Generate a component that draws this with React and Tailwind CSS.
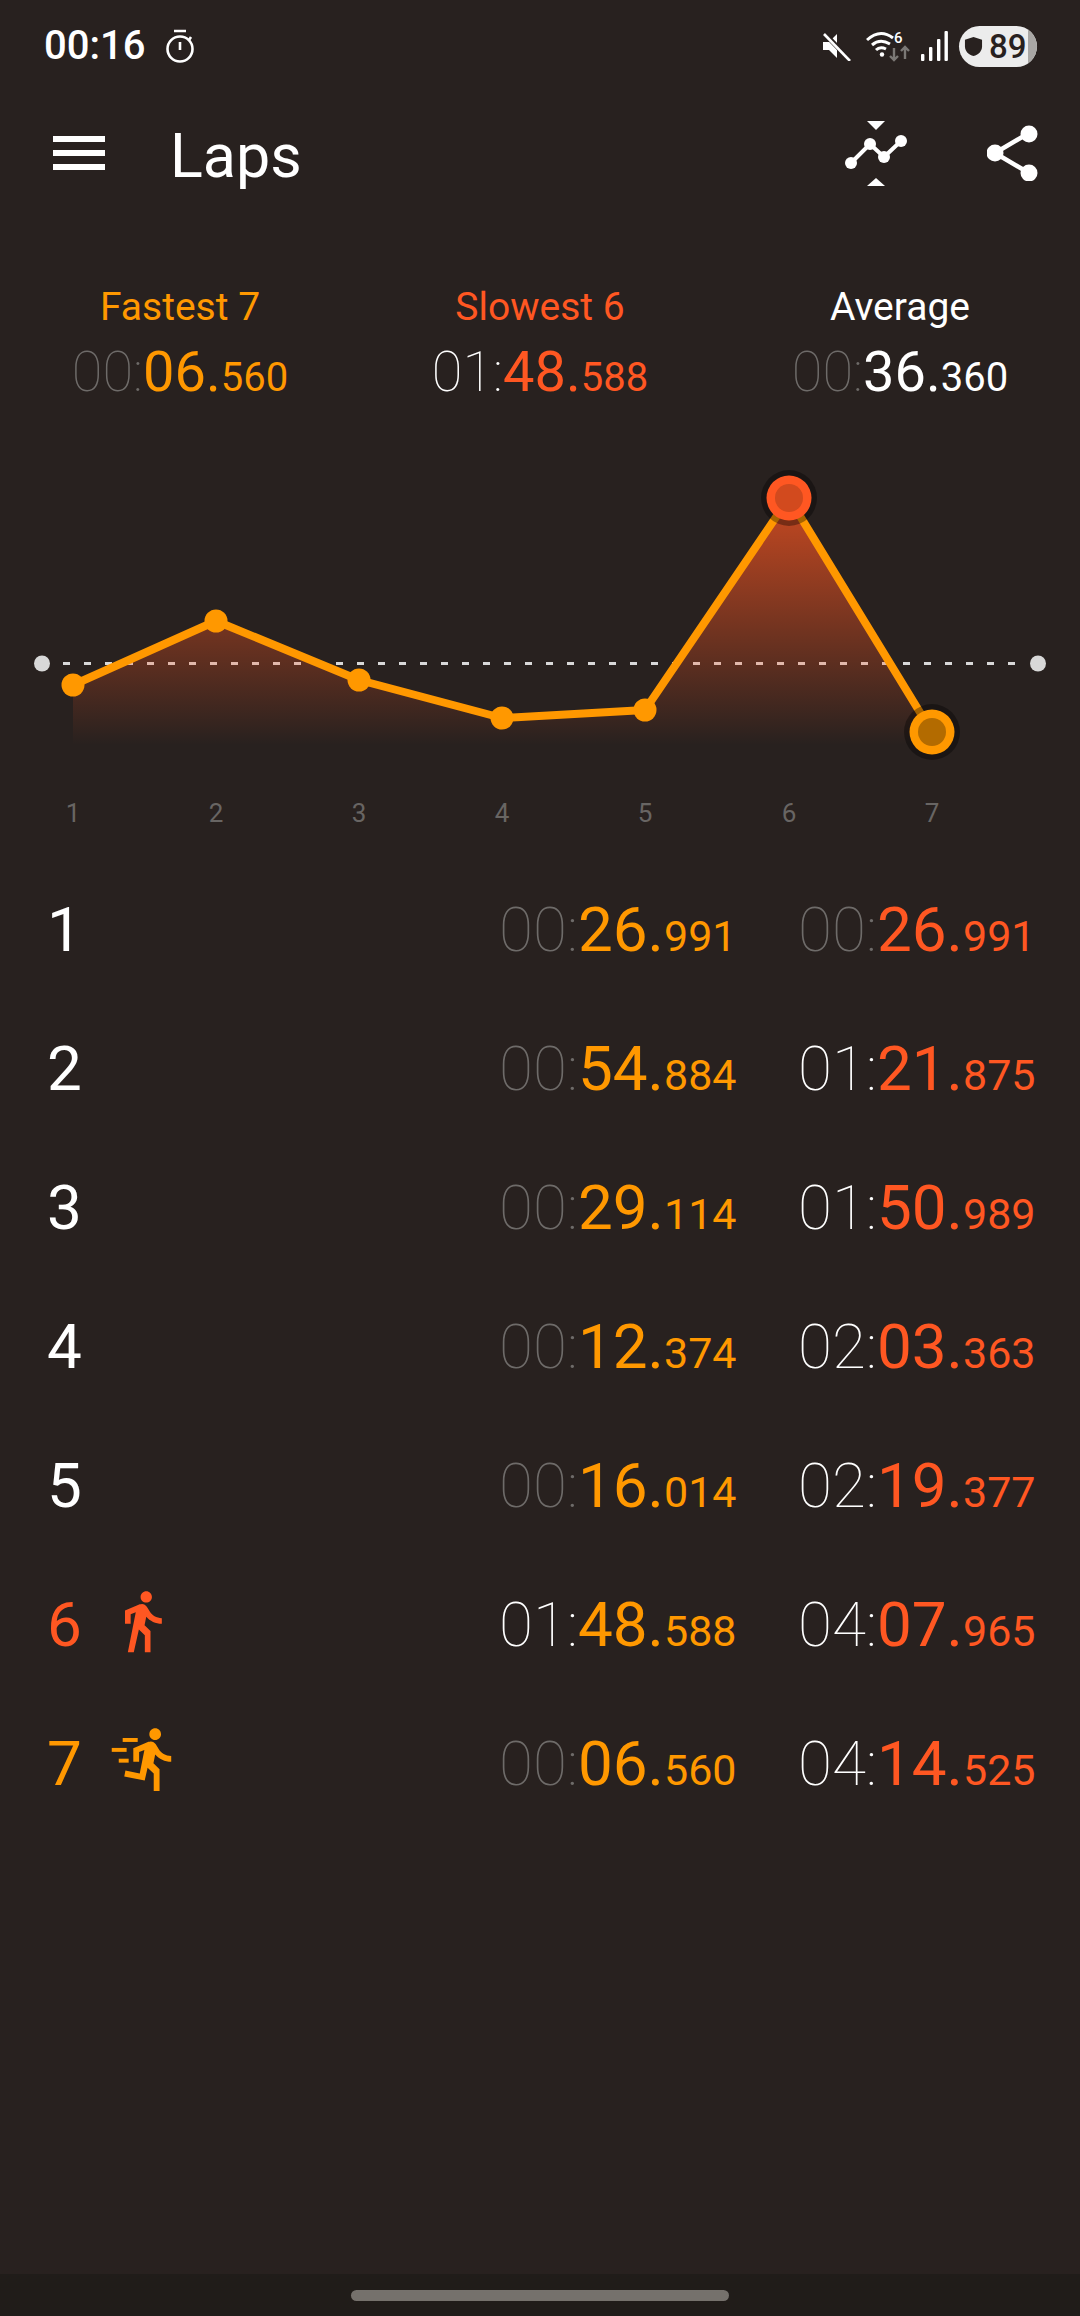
const ORANGE = "#ff9800";
const RED = "#ff5722";

function Time({ min, sec, ms, color, big = 62, small = 43, minBright }) {
  return (
    <span className="inline-flex items-baseline leading-none whitespace-nowrap">
      <span className={`font-thin ${minBright ? "text-white" : "text-[#6e6b69]"}`} style={{ fontSize: big }}>{min}:</span>
      <span className="font-normal" style={{ fontSize: big, color }}>{sec}.</span>
      <span className="font-normal" style={{ fontSize: small, color }}>{ms}</span>
    </span>
  );
}

function Walk() {
  return (
    <svg viewBox="0 0 24 24" className="w-[68px] h-[68px] ml-[1px] mb-[8px] fill-[#ff5722]">
      <path d="M13.5 5.5c1.1 0 2-.9 2-2s-.9-2-2-2-2 .9-2 2 .9 2 2 2zM9.8 8.9L7 23h2.1l1.8-8 2.1 2v6h2v-7.5l-2.1-2 .6-3C14.8 12 16.8 13 19 13v-2c-1.9 0-3.5-1-4.3-2.4l-1-1.6c-.4-.6-1-1-1.7-1-.3 0-.5.1-.8.1L6 8.3V13h2V9.6l1.8-.7" />
    </svg>
  );
}

function Run() {
  return (
    <svg viewBox="0 0 24 24" className="w-[70px] h-[70px] ml-[3px] mb-[10px] fill-[#ff9800]">
      <path d="M15.49 5.48c1.1 0 2-.9 2-2s-.9-2-2-2-2 .9-2 2 .9 2 2 2zm-3.6 13.9l1-4.4 2.1 2v6h2v-7.5l-2.1-2 .6-3c1.3 1.5 3.3 2.5 5.5 2.5v-2c-1.9 0-3.5-1-4.3-2.4l-1-1.6c-.4-.6-1-1-1.7-1-.3 0-.5.1-.8.1l-5.2 2.2v4.7h2v-3.4l1.8-.7-1.6 8.1-4.9-1-.4 2 7 1.4z" />
      <rect x="4.35" y="4.8" width="5.15" height="1.35" />
      <rect x="0.6" y="8.2" width="5.1" height="1.35" />
      <rect x="3" y="11.9" width="3.4" height="1.35" />
    </svg>
  );
}

const laps = [
  { n: 1, a: ["00", "26", "991"], b: ["00", "26", "991"] },
  { n: 2, a: ["00", "54", "884"], b: ["01", "21", "875"], bb: true },
  { n: 3, a: ["00", "29", "114"], b: ["01", "50", "989"], bb: true },
  { n: 4, a: ["00", "12", "374"], b: ["02", "03", "363"], bb: true },
  { n: 5, a: ["00", "16", "014"], b: ["02", "19", "377"], bb: true },
  { n: 6, a: ["01", "48", "588"], b: ["04", "07", "965"], ab: true, bb: true, color: "text-[#ff5722]", icon: <Walk /> },
  { n: 7, a: ["00", "06", "560"], b: ["04", "14", "525"], bb: true, color: "text-[#ff9800]", icon: <Run /> },
];

const pts = [[73, 685], [216, 621], [359, 680], [502, 718], [645, 710], [789, 498], [932, 732]];

function Chart() {
  const line = pts.map((p) => p.join(",")).join(" ");
  return (
    <svg viewBox="0 420 1080 440" className="block w-[1080px] h-[440px]">
      <defs>
        <linearGradient id="fade" gradientUnits="userSpaceOnUse" x1="0" y1="498" x2="0" y2="745">
          <stop offset="0" stopColor={RED} stopOpacity="0.74" />
          <stop offset="1" stopColor={RED} stopOpacity="0" />
        </linearGradient>
      </defs>
      <line x1="63" y1="663.5" x2="1020" y2="663.5" stroke="#d8d8d8" strokeWidth="3" strokeDasharray="7 14" />
      <circle cx="42" cy="663.5" r="8" fill="#d8d8d8" />
      <circle cx="1038" cy="663.5" r="8" fill="#d8d8d8" />
      <polygon points={`${line} 932,745 73,745`} fill="url(#fade)" />
      <polyline points={line} fill="none" stroke={ORANGE} strokeWidth="8" strokeLinejoin="round" />
      {pts.slice(0, 5).map(([x, y]) => (
        <circle key={x} cx={x} cy={y} r="11.5" fill={ORANGE} />
      ))}
      <circle cx="789" cy="498" r="28" fill="#000" fillOpacity="0.35" />
      <circle cx="789" cy="498" r="22.5" fill={RED} />
      <circle cx="789" cy="498" r="14" fill="#d24a1e" />
      <circle cx="932" cy="732" r="28" fill="#000" fillOpacity="0.35" />
      <circle cx="932" cy="732" r="22.5" fill={ORANGE} />
      <circle cx="932" cy="732" r="14" fill="#b36b00" />
      {pts.map(([x], i) => (
        <text key={x} x={x} y="822" textAnchor="middle" fontSize="26" fontFamily="Roboto" fontWeight="400" fill="#686563">
          {i + 1}
        </text>
      ))}
    </svg>
  );
}

function StatusIcons() {
  return (
    <div className="flex items-center">
      <svg viewBox="0 0 30 30" className="w-[30px] h-[30px] mr-[14px]" fill="#fff">
        <path d="M1 11h6l8-8v24l-8-8H1z" />
        <path d="M2 2 L29 30" stroke="#28211f" strokeWidth="5" />
        <path d="M2 3 L28 30" stroke="#fff" strokeWidth="2.6" />
      </svg>
      <svg viewBox="0 0 46 32" className="w-[46px] h-[32px] mr-[8px]" fill="none">
        <path d="M1 10 Q14 -2 27 8" stroke="#fff" strokeWidth="3" />
        <path d="M6 15 Q14 8 24 14" stroke="#fff" strokeWidth="3" />
        <path d="M10 20 Q14 16 20 19" stroke="#fff" strokeWidth="3" />
        <circle cx="16" cy="24.5" r="2.2" fill="#fff" />
        <text x="28" y="13" fontSize="15" fontFamily="Roboto" fontWeight="500" fill="#fff">6</text>
        <path d="M28 18v12M24 26l4 4 4-4" stroke="#7b7875" strokeWidth="2.4" />
        <path d="M39 29V17M35 21l4-4 4 4" stroke="#7b7875" strokeWidth="2.4" />
      </svg>
      <svg viewBox="0 0 28 30" className="w-[28px] h-[30px] mr-[11px]" fill="#fff">
        <rect x="1" y="23" width="3.4" height="7" rx="1" />
        <rect x="9" y="16" width="3.4" height="14" rx="1" />
        <rect x="17" y="8" width="3.4" height="22" rx="1" />
        <rect x="24.5" y="0" width="3.4" height="30" rx="1" />
      </svg>
      <div className="relative w-[78px] h-[41px] rounded-full overflow-hidden bg-[#ececec] flex items-center">
        <div className="absolute right-0 top-0 bottom-0 w-[9px] bg-[#a9a7a5]" />
        <svg viewBox="0 0 20 22" className="relative w-[19px] h-[21px] ml-[5px]" fill="#28211f">
          <path d="M10 1 L19 4 V11 C19 16 15 20 10 21 C5 20 1 16 1 11 V4 Z" />
        </svg>
        <span className="relative ml-[6px] text-[33px] leading-none font-medium text-[#28211f]">89</span>
      </div>
    </div>
  );
}

export default function App() {
  return (
    <div className="w-[1080px] h-[2316px] flex flex-col bg-[#28211f] text-white font-['Roboto',sans-serif] overflow-hidden">
      {/* status bar */}
      <div className="h-[92px] flex items-center justify-between pl-[44px] pr-[43px]">
        <div className="flex items-center">
          <span className="text-[40px] font-medium leading-none">00:16</span>
          <svg viewBox="0 0 30 34" className="w-[30px] h-[34px] ml-[20px]" fill="none" stroke="#fff" strokeWidth="2.6">
            <circle cx="15" cy="20" r="12.5" />
            <path d="M9 2h12M15 13v8M26 8l-2 3" />
          </svg>
        </div>
        <StatusIcons />
      </div>

      {/* toolbar */}
      <div className="h-[122px] flex items-center pl-[53px] pr-[41px]">
        <div className="w-[52px] flex flex-col gap-[8px]">
          <div className="h-[6px] bg-white" />
          <div className="h-[6px] bg-white" />
          <div className="h-[6px] bg-white" />
        </div>
        <span className="ml-[65px] mt-[6px] text-[61px] font-normal leading-none">Laps</span>
        <svg viewBox="0 0 66 66" className="ml-auto mt-[2px] w-[66px] h-[66px]" fill="#fff">
          <path d="M23 0h18l-9 9z" />
          <path d="M23 65h18l-9-8z" />
          <polyline points="7,42 26,23 40,36 57,20" fill="none" stroke="#fff" strokeWidth="4" />
          <circle cx="7" cy="42" r="6" />
          <circle cx="26" cy="23" r="6" />
          <circle cx="40" cy="36" r="6" />
          <circle cx="57" cy="20" r="6" />
        </svg>
        <svg viewBox="0 0 52 56" className="ml-[77px] w-[52px] h-[56px]" fill="#fff">
          <path d="M8 28 L42 8 M8 28 L42 48" stroke="#fff" strokeWidth="4.5" />
          <circle cx="42" cy="9" r="8.5" />
          <circle cx="8" cy="28" r="8.5" />
          <circle cx="42" cy="48" r="8.5" />
        </svg>
      </div>

      {/* summary */}
      <div className="grid grid-cols-3 h-[206px] pt-[72px] text-center">
        <div className="flex flex-col items-center gap-[16px]">
          <span className="text-[39px] leading-[42px] font-normal text-[#ff9800]">Fastest 7</span>
          <Time min="00" sec="06" ms="560" color={ORANGE} big={56} small={40} />
        </div>
        <div className="flex flex-col items-center gap-[16px]">
          <span className="text-[39px] leading-[42px] font-normal text-[#ff5722]">Slowest 6</span>
          <Time min="01" sec="48" ms="588" color={RED} big={56} small={40} minBright />
        </div>
        <div className="flex flex-col items-center gap-[16px]">
          <span className="text-[39px] leading-[42px] font-normal text-white">Average</span>
          <Time min="00" sec="36" ms="360" color="#fff" big={56} small={40} />
        </div>
      </div>

      <Chart />

      {/* laps */}
      <div className="flex flex-col">
        {laps.map((l) => (
          <div key={l.n} className="h-[139px] flex items-center pl-[47px]">
            <span className={`w-[60px] text-[62px] font-normal leading-none ${l.color || "text-white"}`}>{l.n}</span>
            <div className="w-[392px] flex items-center">{l.icon}</div>
            <div className="w-[299px]">
              <Time min={l.a[0]} sec={l.a[1]} ms={l.a[2]} color={ORANGE} minBright={l.ab} />
            </div>
            <div className="w-[278px]">
              <Time min={l.b[0]} sec={l.b[1]} ms={l.b[2]} color={RED} minBright={l.bb} />
            </div>
          </div>
        ))}
      </div>

      <div className="flex-1" />

      {/* navigation bar */}
      <div className="h-[42px] bg-[#201c19] flex justify-center pt-[16px]">
        <div className="w-[378px] h-[11px] rounded-full bg-[#75716c]" />
      </div>
    </div>
  );
}
